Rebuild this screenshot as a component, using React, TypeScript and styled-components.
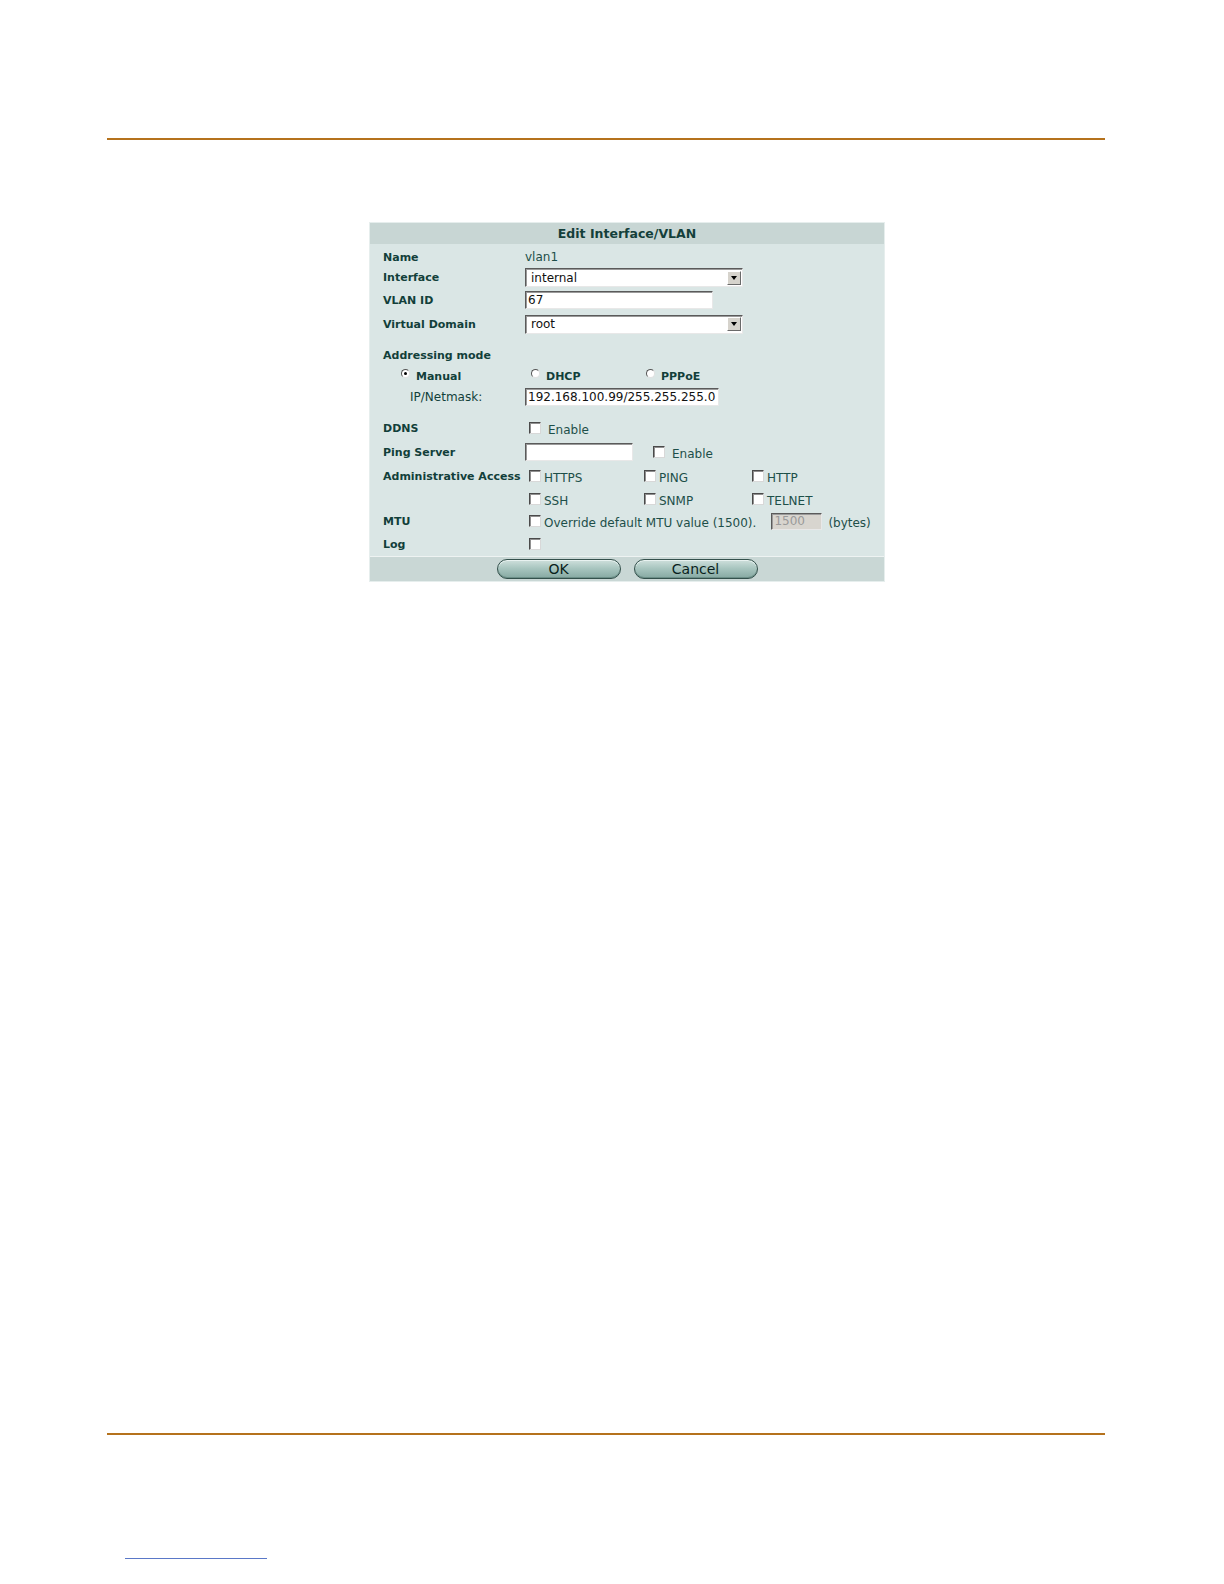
import React from "react";
import styled, { createGlobalStyle } from "styled-components";

const GlobalStyle = createGlobalStyle`
  html, body {
    margin: 0;
    padding: 0;
    background: #ffffff;
    overflow: hidden;
  }
  body {
    font-family: "DejaVu Sans", Verdana, sans-serif;
  }
`;

const Page = styled.div`
  padding-top: 138px;
  display: flex;
  flex-direction: column;
  align-items: flex-start;
`;

const Rule = styled.div<{ $top: number }>`
  margin: ${p => p.$top}px 0 0 107px;
  width: 998px;
  height: 2px;
  background: #b5721d;
`;

const LinkLine = styled.div`
  margin: 123px 0 0 125px;
  width: 142px;
  height: 1px;
  background: #5a78c8;
`;

const Panel = styled.div`
  margin: 82px 0 0 369px;
  width: 516px;
  box-sizing: border-box;
  border: 1px solid #e6eeed;
  background: #dae6e5;
  color: #123f3a;
  font-size: 11px;
`;

const Title = styled.div`
  height: 21px;
  line-height: 21px;
  background: #c8d6d4;
  text-align: center;
  font-weight: bold;
  font-size: 12.5px;
  color: #143f3a;
`;

const Body = styled.div`
  padding: 3px 0 0 13px;
`;

const Row = styled.div<{ $h: number }>`
  height: ${p => p.$h}px;
  display: grid;
  grid-template-columns: 142px 1fr;
  align-items: center;
`;

const Spacer = styled.div<{ $h: number }>`
  height: ${p => p.$h}px;
`;

const Label = styled.div<{ $indent?: number; $normal?: boolean }>`
  padding-left: ${p => p.$indent ?? 0}px;
  font-weight: ${p => (p.$normal ? "normal" : "bold")};
  font-size: ${p => (p.$normal ? 12 : 11)}px;
  white-space: nowrap;
`;

const Value = styled.div`
  display: flex;
  align-items: center;
`;

const Plain = styled.span`
  font-size: 12px;
  color: #1d4f49;
`;

const SelectBox = styled.div<{ $w: number }>`
  width: ${p => p.$w}px;
  height: 19px;
  box-sizing: border-box;
  display: flex;
  align-items: center;
  justify-content: space-between;
  background: #ffffff;
  border: 1px solid;
  border-color: #5a5a5a #e8e8e8 #e8e8e8 #5a5a5a;
  box-shadow: inset 1px 1px 0 #9a9a9a;
  padding: 0 1px 0 5px;
  font-size: 12px;
  color: #111;
`;

const Arrow = styled.span`
  width: 14px;
  height: 14px;
  box-sizing: border-box;
  background: #d6d3cc;
  border: 1px solid;
  border-color: #ffffff #6a6a6a #6a6a6a #ffffff;
  display: flex;
  align-items: center;
  justify-content: center;
  &::after {
    content: "";
    border-left: 3px solid transparent;
    border-right: 3px solid transparent;
    border-top: 4px solid #000;
  }
`;

const TextBox = styled.input<{ $w: number; $h?: number; $disabled?: boolean }>`
  width: ${p => p.$w}px;
  height: ${p => p.$h ?? 18}px;
  box-sizing: border-box;
  margin: 0;
  padding: 0 2px;
  border: 1px solid;
  border-color: #5a5a5a #e8e8e8 #e8e8e8 #5a5a5a;
  box-shadow: inset 1px 1px 0 #9a9a9a;
  background: ${p => (p.$disabled ? "#d8d5cf" : "#ffffff")};
  color: ${p => (p.$disabled ? "#9a9a9a" : "#111")};
  font-family: "DejaVu Sans", Verdana, sans-serif;
  font-size: 12px;
  outline: none;
`;

const Check = styled.span<{ $ml?: number }>`
  display: inline-block;
  flex: none;
  width: 12px;
  height: 12px;
  box-sizing: border-box;
  margin-left: ${p => p.$ml ?? 4}px;
  background: #ffffff;
  border: 1px solid;
  border-color: #4a4a4a #d8d8d8 #d8d8d8 #4a4a4a;
  box-shadow: inset 1px 1px 0 #909090;
`;

const CheckText = styled.span<{ $gap?: number }>`
  margin: 4px 0 0 ${p => p.$gap ?? 3}px;
  font-size: 12px;
  color: #1d4f49;
  white-space: nowrap;
`;

const CheckGrid = styled.div`
  display: grid;
  grid-template-columns: 115px 108px auto;
  align-items: center;
`;

const CheckItem = styled.div`
  display: flex;
  align-items: center;
`;

const RadioRow = styled.div`
  height: 22px;
  display: grid;
  grid-template-columns: 18px 130px 115px auto;
  align-items: center;
`;

const RadioItem = styled.div`
  display: flex;
  align-items: center;
  font-weight: bold;
`;

const Radio = styled.span<{ $on?: boolean }>`
  position: relative;
  top: -3px;
  width: 9px;
  height: 9px;
  box-sizing: border-box;
  border-radius: 50%;
  background: #ffffff;
  border: 1px solid;
  border-color: #555 #e0e0e0 #e0e0e0 #555;
  margin-right: 6px;
  display: flex;
  align-items: center;
  justify-content: center;
  &::after {
    content: "";
    display: ${p => (p.$on ? "block" : "none")};
    width: 3px;
    height: 3px;
    border-radius: 50%;
    background: #000;
  }
`;

const Footer = styled.div`
  height: 24px;
  border-top: 1px solid #eef3f2;
  background: #c9d7d5;
  display: flex;
  align-items: center;
  justify-content: center;
  gap: 13px;
`;

const Button = styled.button`
  width: 124px;
  height: 20px;
  margin: 0;
  padding: 0;
  border: 1px solid #34514c;
  border-radius: 10px;
  background: linear-gradient(#cfe0dc 0%, #a9c6c0 45%, #86a9a2 100%);
  box-shadow: inset 0 1px 0 #e8f2f0, inset 0 -1px 0 #6c8f88;
  color: #0a1f1c;
  font-family: "DejaVu Sans", Verdana, sans-serif;
  font-size: 14px;
  line-height: 18px;
`;

const adminRows = [
  ["HTTPS", "PING", "HTTP"],
  ["SSH", "SNMP", "TELNET"],
];

export default function App() {
  return (
    <Page>
      <GlobalStyle />
      <Rule $top={0} />
      <Panel>
        <Title>Edit Interface/VLAN</Title>
        <Body>
          <Row $h={20}>
            <Label>Name</Label>
            <Value><Plain>vlan1</Plain></Value>
          </Row>
          <Row $h={21}>
            <Label>Interface</Label>
            <Value>
              <SelectBox $w={218}>internal<Arrow /></SelectBox>
            </Value>
          </Row>
          <Row $h={24}>
            <Label>VLAN ID</Label>
            <Value><TextBox $w={188} readOnly value="67" /></Value>
          </Row>
          <Row $h={24}>
            <Label>Virtual Domain</Label>
            <Value>
              <SelectBox $w={218}>root<Arrow /></SelectBox>
            </Value>
          </Row>
          <Spacer $h={9} />
          <Row $h={20}>
            <Label>Addressing mode</Label>
          </Row>
          <RadioRow>
            <span />
            <RadioItem><Radio $on />Manual</RadioItem>
            <RadioItem><Radio />DHCP</RadioItem>
            <RadioItem><Radio />PPPoE</RadioItem>
          </RadioRow>
          <Row $h={20}>
            <Label $indent={27} $normal>IP/Netmask:</Label>
            <Value><TextBox $w={194} readOnly value="192.168.100.99/255.255.255.0" /></Value>
          </Row>
          <Spacer $h={10} />
          <Row $h={22}>
            <Label>DDNS</Label>
            <CheckItem><Check /><CheckText $gap={7}>Enable</CheckText></CheckItem>
          </Row>
          <Row $h={26}>
            <Label>Ping Server</Label>
            <Value>
              <TextBox $w={108} readOnly value="" />
              <Check $ml={20} />
              <CheckText $gap={7}>Enable</CheckText>
            </Value>
          </Row>
          {adminRows.map((items, i) => (
            <Row $h={i === 0 ? 22 : 23} key={i}>
              <Label>{i === 0 ? "Administrative Access" : ""}</Label>
              <CheckGrid>
                {items.map(item => (
                  <CheckItem key={item}><Check /><CheckText>{item}</CheckText></CheckItem>
                ))}
              </CheckGrid>
            </Row>
          ))}
          <Row $h={22}>
            <Label>MTU</Label>
            <Value>
              <Check />
              <CheckText>Override default MTU value (1500).</CheckText>
              <TextBox $w={51} $h={17} $disabled readOnly value="1500" style={{ marginLeft: 15 }} />
              <CheckText $gap={6}>(bytes)</CheckText>
            </Value>
          </Row>
          <Row $h={24}>
            <Label>Log</Label>
            <Value><Check /></Value>
          </Row>
        </Body>
        <Footer>
          <Button>OK</Button>
          <Button>Cancel</Button>
        </Footer>
      </Panel>
      <Rule $top={851} />
      <LinkLine />
    </Page>
  );
}
